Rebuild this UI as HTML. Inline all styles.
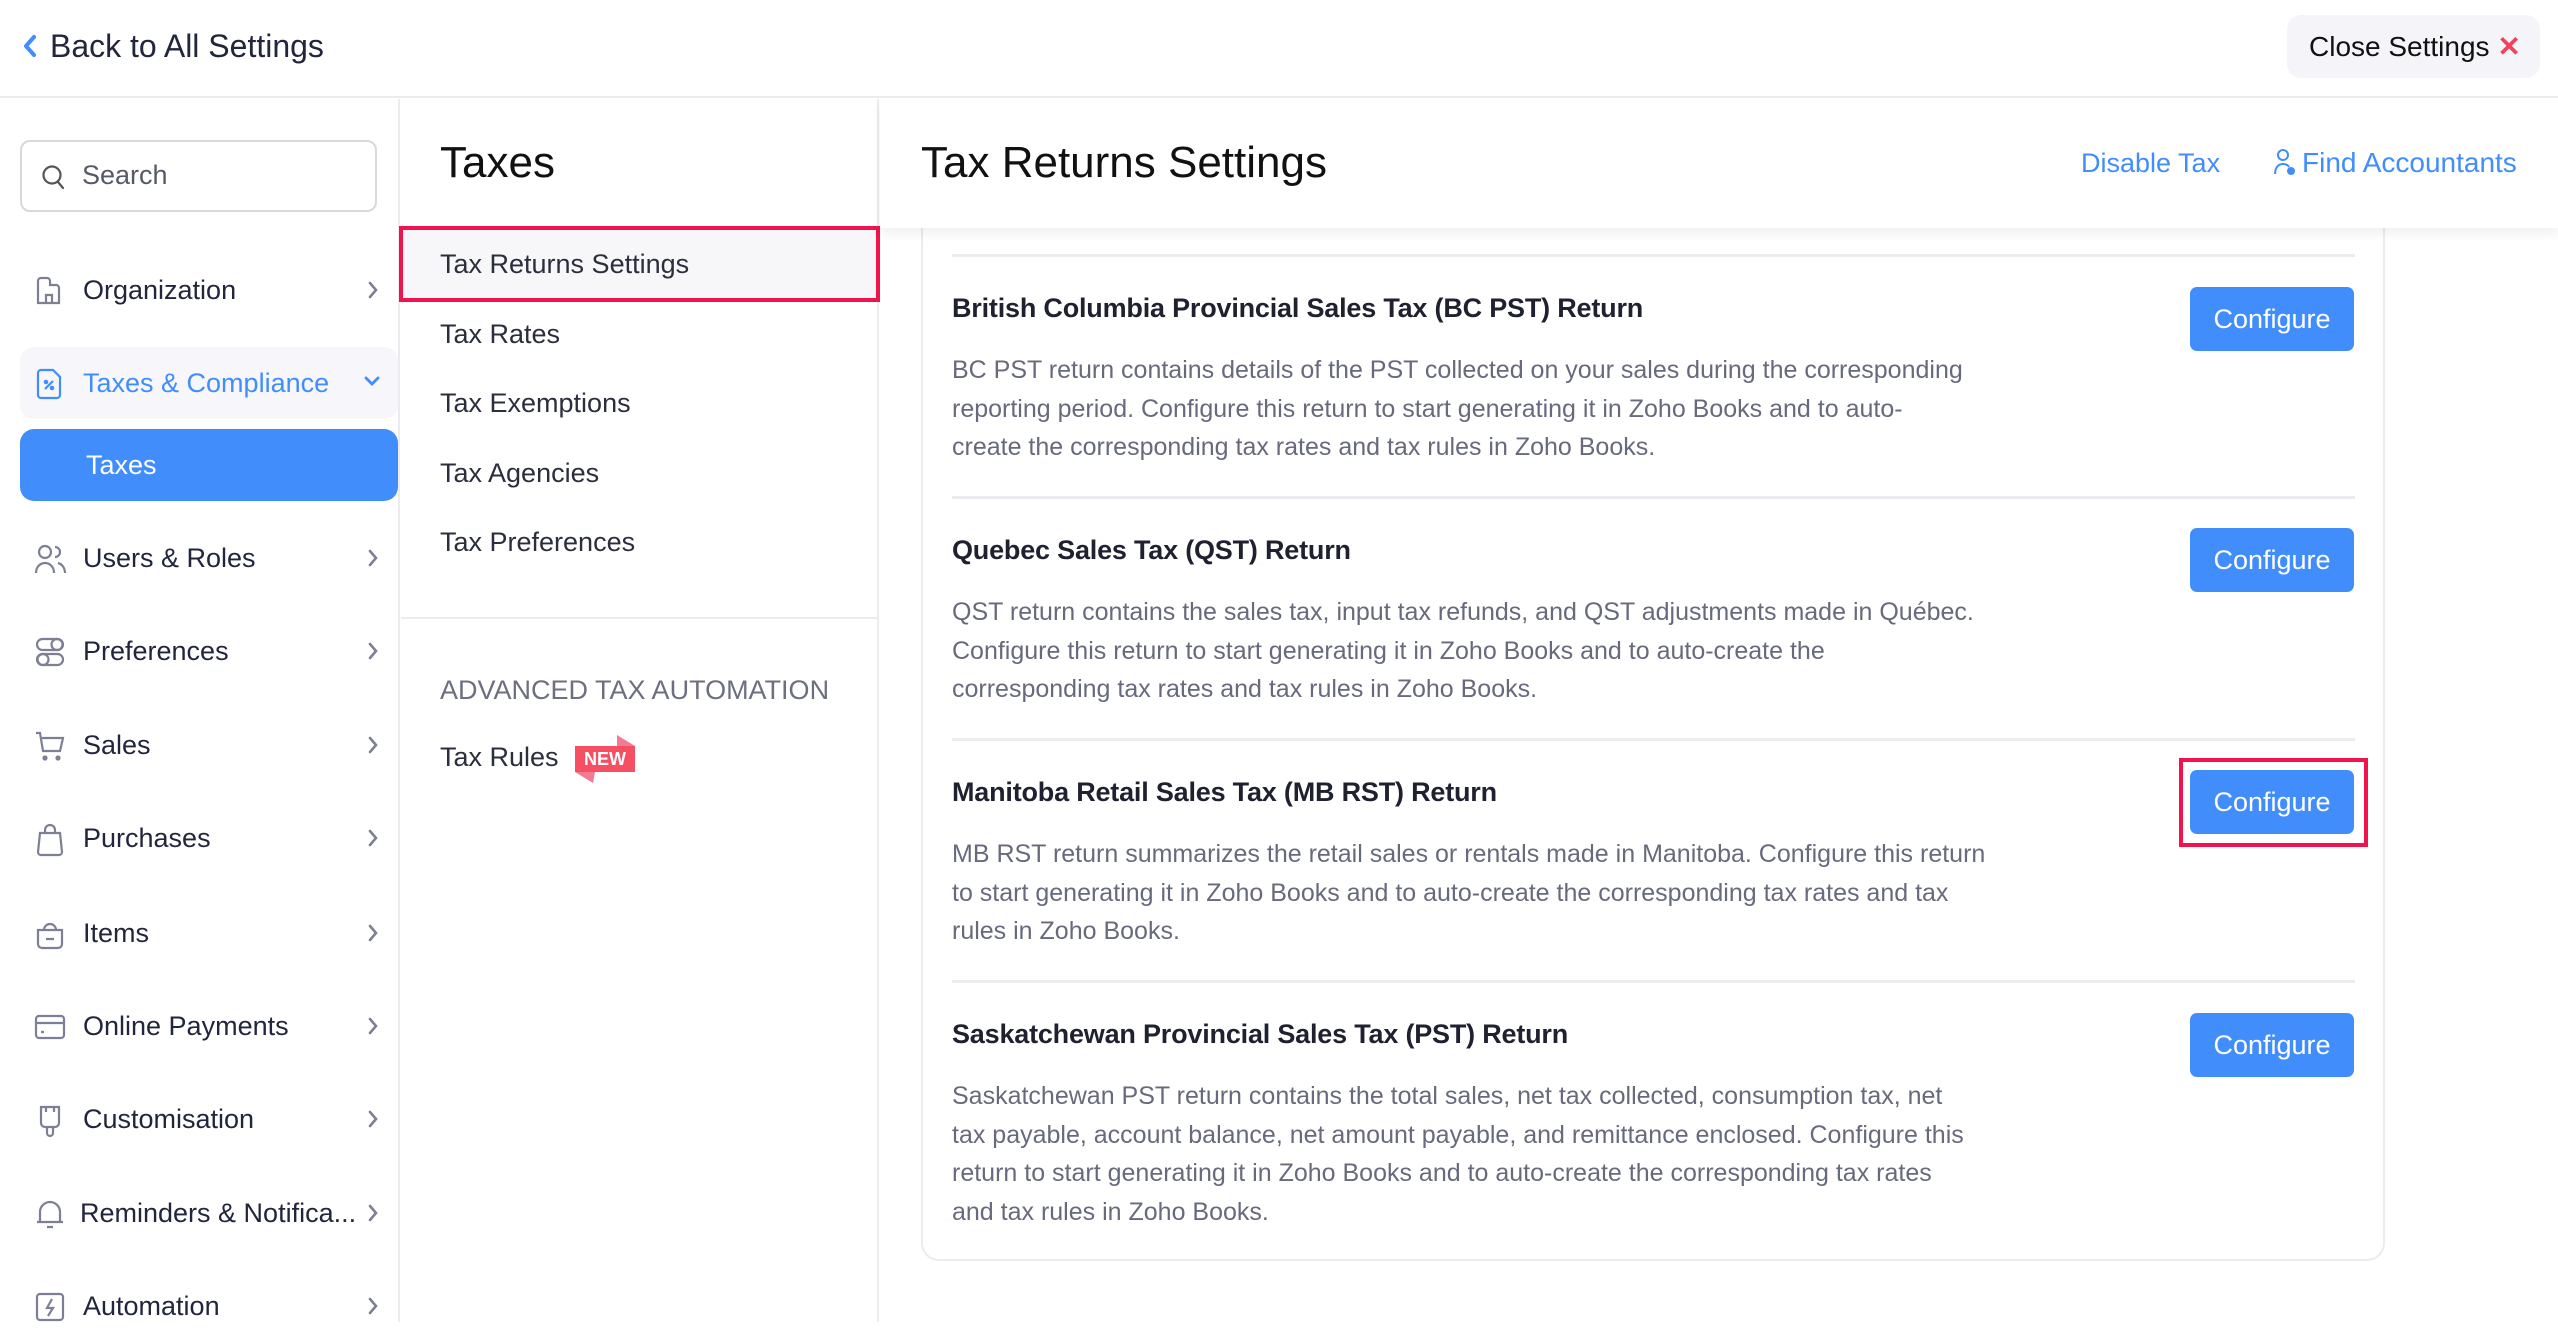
<!DOCTYPE html>
<html><head><meta charset="utf-8">
<style>
*{box-sizing:border-box;margin:0;padding:0}
html,body{width:2558px;height:1322px;overflow:hidden;background:#fff;font-family:"Liberation Sans",Arial,sans-serif;color:#21263c}
.abs{position:absolute}
.hdr{left:0;top:0;width:2558px;height:98px;border-bottom:2px solid #ebebf0}
.back{left:22px;top:28px;font-size:32px;color:#21263c;white-space:nowrap}
.close{left:2287px;top:15px;width:253px;height:63px;background:#f5f5f9;border-radius:14px;font-size:28px;line-height:63px;padding-left:22px;color:#111}
.side{left:0;top:99px;width:400px;height:1223px;border-right:2px solid #ebebf0}
.search{left:20px;top:140px;width:357px;height:72px;border:2px solid #d8d8de;border-radius:10px}
.mi{position:absolute;left:20px;width:378px;height:60px;font-size:27px;color:#21263c}
.mi svg.ic{position:absolute;left:14px;top:15px}
.mi .t{position:absolute;left:63px;top:15px;white-space:nowrap}
.mi .ch{position:absolute;left:346px;top:19px}
.mid{left:401px;top:99px;width:478px;height:1223px;border-right:2px solid #ebebf0}
.ml{position:absolute;left:440px;font-size:27px;color:#2b2e3c;white-space:nowrap}
.rhdr{left:880px;top:99px;width:1678px;height:129px;background:#fff;box-shadow:0 6px 10px rgba(0,0,0,0.06);z-index:2}
.card{left:921px;top:200px;width:1464px;height:1061px;border:2px solid #ebebf0;border-top:none;border-radius:0 0 18px 18px}
.div{position:absolute;left:952px;width:1403px;height:3px;background:#ebebf0}
.tt{position:absolute;left:952px;font-size:27px;font-weight:bold;color:#1f2130;white-space:nowrap;letter-spacing:-0.2px}
.ds{position:absolute;left:952px;font-size:25px;line-height:38.6px;color:#676a7c;white-space:nowrap}
.btn{position:absolute;left:2190px;width:164px;height:64px;background:#408dfb;border-radius:7px;color:#fff;font-size:27px;text-align:center;line-height:64px}
</style></head><body>
<div class="abs hdr"></div>
<svg class="abs" style="left:22px;top:34px" width="16" height="24" viewBox="0 0 16 24"><path d="M12 3 L4 12 L12 21" fill="none" stroke="#408dfb" stroke-width="4" stroke-linecap="round" stroke-linejoin="round"/></svg>
<div class="abs back" style="left:50px">Back to All Settings</div>
<div class="abs close">Close Settings <span style="color:#f0425a;font-weight:bold">✕</span></div>

<div class="abs side"></div>
<div class="abs search"></div>
<svg class="abs" style="left:41px;top:163px" width="26" height="28" viewBox="0 0 26 28"><circle cx="11" cy="12" r="8.5" fill="none" stroke="#555" stroke-width="2.2"/><path d="M17 19 L22 25" stroke="#555" stroke-width="2.2" stroke-linecap="round"/></svg>
<div class="abs" style="left:82px;top:160px;font-size:27px;color:#555a66">Search</div>

<div class="mi" style="top:260px"><svg class="ic" width="32" height="32" viewBox="0 0 32 32" fill="none" stroke="#7d8094" stroke-width="2.2"><path d="M4 28V6a3 3 0 0 1 3-3h6a3 3 0 0 1 3 3v4h6a3 3 0 0 1 3 3v15z M12 28v-8h6v8"/></svg><span class="t">Organization</span><svg class="ch" width="14" height="22" viewBox="0 0 14 22"><path d="M4 4l6 7-6 7" fill="none" stroke="#7d8094" stroke-width="2.6" stroke-linecap="round"/></svg></div>

<div class="abs" style="left:20px;top:347px;width:378px;height:72px;background:#f6f6fb;border-radius:14px"></div>
<div class="mi" style="top:353px;color:#408dfb"><svg class="ic" width="32" height="32" viewBox="0 0 32 32" fill="none" stroke="#408dfb" stroke-width="2.2"><path d="M7 2h12l7 7v18a3 3 0 0 1-3 3H7a3 3 0 0 1-3-3V5a3 3 0 0 1 3-3z M11 21l8-8"/><circle cx="12" cy="14" r="1.2" fill="#408dfb"/><circle cx="18" cy="20" r="1.2" fill="#408dfb"/></svg><span class="t">Taxes &amp; Compliance</span><svg class="ch" style="left:342px;top:20px" width="20" height="16" viewBox="0 0 20 16"><path d="M4 5l6 6 6-6" fill="none" stroke="#408dfb" stroke-width="2.8" stroke-linecap="round"/></svg></div>
<div class="abs" style="left:20px;top:429px;width:378px;height:72px;background:#408dfb;border-radius:14px;color:#fff;font-size:27px;line-height:72px;padding-left:66px">Taxes</div>

<div class="mi" style="top:528px"><svg class="ic" width="34" height="32" viewBox="0 0 34 32" fill="none" stroke="#7d8094" stroke-width="2.2"><circle cx="11" cy="9" r="6"/><path d="M2 30c0-6 4-10 9-10s9 4 9 10"/><path d="M21 4a5 5 0 0 1 0 10 M24 20c4 1 7 5 7 10"/></svg><span class="t">Users &amp; Roles</span><svg class="ch" width="14" height="22" viewBox="0 0 14 22"><path d="M4 4l6 7-6 7" fill="none" stroke="#7d8094" stroke-width="2.6" stroke-linecap="round"/></svg></div>
<div class="mi" style="top:621px"><svg class="ic" width="32" height="32" viewBox="0 0 32 32" fill="none" stroke="#7d8094" stroke-width="2.2"><rect x="3" y="3" width="26" height="11" rx="5.5"/><rect x="3" y="18" width="26" height="11" rx="5.5"/><circle cx="23" cy="8.5" r="5.5"/><circle cx="9" cy="23.5" r="5.5"/></svg><span class="t">Preferences</span><svg class="ch" width="14" height="22" viewBox="0 0 14 22"><path d="M4 4l6 7-6 7" fill="none" stroke="#7d8094" stroke-width="2.6" stroke-linecap="round"/></svg></div>
<div class="mi" style="top:715px"><svg class="ic" width="32" height="32" viewBox="0 0 32 32" fill="none" stroke="#7d8094" stroke-width="2.2"><path d="M2 3h4l3 18h17l3-13H8"/><circle cx="11" cy="28" r="1.5" fill="#7d8094"/><circle cx="24" cy="28" r="1.5" fill="#7d8094"/></svg><span class="t">Sales</span><svg class="ch" width="14" height="22" viewBox="0 0 14 22"><path d="M4 4l6 7-6 7" fill="none" stroke="#7d8094" stroke-width="2.6" stroke-linecap="round"/></svg></div>
<div class="mi" style="top:808px"><svg class="ic" width="32" height="34" viewBox="0 0 32 34" fill="none" stroke="#7d8094" stroke-width="2.2"><path d="M6 10h20l2 19a3 3 0 0 1-3 3H7a3 3 0 0 1-3-3z M11 10V7a5 5 0 0 1 10 0v3"/></svg><span class="t">Purchases</span><svg class="ch" width="14" height="22" viewBox="0 0 14 22"><path d="M4 4l6 7-6 7" fill="none" stroke="#7d8094" stroke-width="2.6" stroke-linecap="round"/></svg></div>
<div class="mi" style="top:903px"><svg class="ic" width="32" height="32" viewBox="0 0 32 32" fill="none" stroke="#7d8094" stroke-width="2.2"><path d="M4 12h24v14a4 4 0 0 1-4 4H8a4 4 0 0 1-4-4z M10 12a6 6 0 0 1 12 0 M12 21h8"/></svg><span class="t">Items</span><svg class="ch" width="14" height="22" viewBox="0 0 14 22"><path d="M4 4l6 7-6 7" fill="none" stroke="#7d8094" stroke-width="2.6" stroke-linecap="round"/></svg></div>
<div class="mi" style="top:996px"><svg class="ic" width="32" height="32" viewBox="0 0 32 32" fill="none" stroke="#7d8094" stroke-width="2.2"><rect x="2" y="5" width="28" height="22" rx="3"/><path d="M2 12h28 M7 21h3"/></svg><span class="t">Online Payments</span><svg class="ch" width="14" height="22" viewBox="0 0 14 22"><path d="M4 4l6 7-6 7" fill="none" stroke="#7d8094" stroke-width="2.6" stroke-linecap="round"/></svg></div>
<div class="mi" style="top:1089px"><svg class="ic" width="32" height="34" viewBox="0 0 32 34" fill="none" stroke="#7d8094" stroke-width="2.2"><path d="M7 3h18v16a4 4 0 0 1-4 4H11a4 4 0 0 1-4-4z M12 3v5 M20 3v5 M13 23v6a3 3 0 0 0 6 0v-6"/></svg><span class="t">Customisation</span><svg class="ch" width="14" height="22" viewBox="0 0 14 22"><path d="M4 4l6 7-6 7" fill="none" stroke="#7d8094" stroke-width="2.6" stroke-linecap="round"/></svg></div>
<div class="mi" style="top:1183px"><svg class="ic" width="32" height="32" viewBox="0 0 32 32" fill="none" stroke="#7d8094" stroke-width="2.2"><path d="M6 24V14a10 10 0 0 1 20 0v10 M3 24h26 M13 29h6"/></svg><span class="t" style="left:60px">Reminders &amp; Notifica...</span><svg class="ch" width="14" height="22" viewBox="0 0 14 22"><path d="M4 4l6 7-6 7" fill="none" stroke="#7d8094" stroke-width="2.6" stroke-linecap="round"/></svg></div>
<div class="mi" style="top:1276px"><svg class="ic" width="32" height="32" viewBox="0 0 32 32" fill="none" stroke="#7d8094" stroke-width="2.2"><rect x="3" y="3" width="26" height="26" rx="3"/><path d="M18 8l-5 9h6l-5 8"/></svg><span class="t">Automation</span><svg class="ch" width="14" height="22" viewBox="0 0 14 22"><path d="M4 4l6 7-6 7" fill="none" stroke="#7d8094" stroke-width="2.6" stroke-linecap="round"/></svg></div>

<div class="abs mid"></div>
<div class="abs" style="left:440px;top:138px;font-size:44px;color:#111">Taxes</div>
<div class="abs" style="left:399px;top:226px;width:481px;height:76px;border:4px solid #f0134d;background:#f7f7fa"></div>
<div class="ml" style="top:249px">Tax Returns Settings</div>
<div class="ml" style="top:319px">Tax Rates</div>
<div class="ml" style="top:388px">Tax Exemptions</div>
<div class="ml" style="top:458px">Tax Agencies</div>
<div class="ml" style="top:527px">Tax Preferences</div>
<div class="abs" style="left:401px;top:617px;width:477px;height:2px;background:#ebebf0"></div>
<div class="ml" style="top:675px;color:#6c6f80">ADVANCED TAX AUTOMATION</div>
<div class="ml" style="top:742px">Tax Rules</div>
<svg class="abs" style="left:573px;top:735px" width="64" height="48" viewBox="0 0 64 48"><path d="M44 0 L62 11 L44 11z" fill="#f27a94"/><path d="M2 37 L22 37 L20 48z" fill="#f27a94"/><rect x="2" y="11" width="60" height="26" fill="#f64f64"/><text x="32" y="30" font-family="Liberation Sans,Arial,sans-serif" font-size="18" font-weight="bold" fill="#fff" text-anchor="middle">NEW</text></svg>

<div class="abs card"></div>
<div class="abs rhdr"></div>
<div class="abs" style="left:921px;top:138px;font-size:44px;color:#111;z-index:3">Tax Returns Settings</div>
<div class="abs" style="left:2081px;top:148px;font-size:27px;color:#408dfb;z-index:3">Disable Tax</div>
<svg class="abs" style="left:2273px;top:148px;z-index:3" width="24" height="28" viewBox="0 0 24 28" fill="none" stroke="#408dfb" stroke-width="2"><circle cx="10" cy="7" r="5"/><path d="M2 26c0-6 3-10 8-10 3 0 5 1 6 3"/><circle cx="18" cy="23" r="3" fill="#408dfb"/></svg>
<div class="abs" style="left:2302px;top:147px;font-size:28px;color:#408dfb;z-index:3">Find Accountants</div>

<div class="div" style="top:254px"></div>
<div class="tt" style="top:293px">British Columbia Provincial Sales Tax (BC PST) Return</div>
<div class="ds" style="top:351px">BC PST return contains details of the PST collected on your sales during the corresponding<br>reporting period. Configure this return to start generating it in Zoho Books and to auto-<br>create the corresponding tax rates and tax rules in Zoho Books.</div>
<div class="btn" style="top:287px">Configure</div>

<div class="div" style="top:496px"></div>
<div class="tt" style="top:535px">Quebec Sales Tax (QST) Return</div>
<div class="ds" style="top:593px">QST return contains the sales tax, input tax refunds, and QST adjustments made in Québec.<br>Configure this return to start generating it in Zoho Books and to auto-create the<br>corresponding tax rates and tax rules in Zoho Books.</div>
<div class="btn" style="top:528px">Configure</div>

<div class="div" style="top:738px"></div>
<div class="tt" style="top:777px">Manitoba Retail Sales Tax (MB RST) Return</div>
<div class="ds" style="top:835px">MB RST return summarizes the retail sales or rentals made in Manitoba. Configure this return<br>to start generating it in Zoho Books and to auto-create the corresponding tax rates and tax<br>rules in Zoho Books.</div>
<div class="abs" style="left:2179px;top:758px;width:189px;height:89px;border:4px solid #f0134d"></div>
<div class="btn" style="top:770px">Configure</div>

<div class="div" style="top:980px"></div>
<div class="tt" style="top:1019px">Saskatchewan Provincial Sales Tax (PST) Return</div>
<div class="ds" style="top:1077px">Saskatchewan PST return contains the total sales, net tax collected, consumption tax, net<br>tax payable, account balance, net amount payable, and remittance enclosed. Configure this<br>return to start generating it in Zoho Books and to auto-create the corresponding tax rates<br>and tax rules in Zoho Books.</div>
<div class="btn" style="top:1013px">Configure</div>
</body></html>
